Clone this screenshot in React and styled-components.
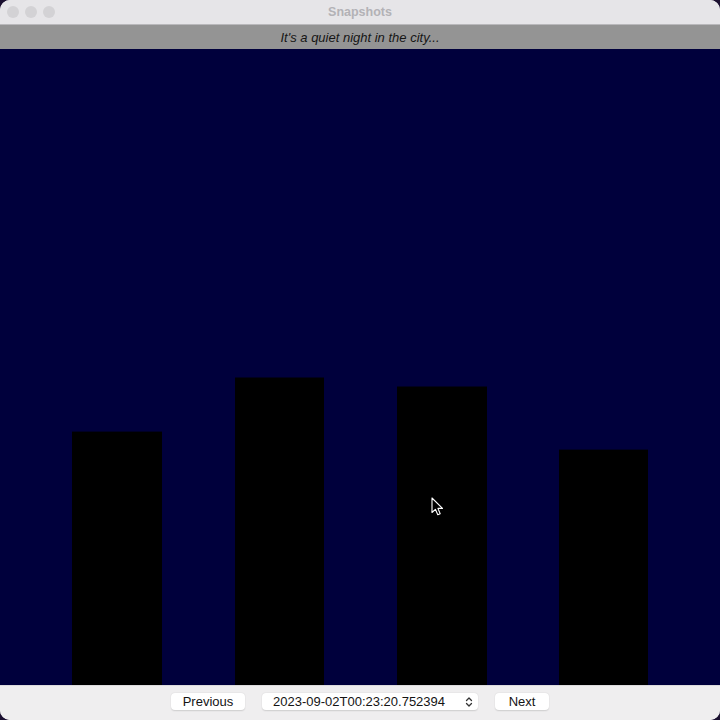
import React from "react";
import styled, { createGlobalStyle } from "styled-components";

const Global = createGlobalStyle`
  html, body { margin: 0; padding: 0; background: #1b1030; }
  body { font-family: "Liberation Sans", "Noto Sans", Arial, sans-serif; }
  * { box-sizing: border-box; }
`;

const Window = styled.div`
  width: 720px;
  height: 720px;
  display: flex;
  flex-direction: column;
  border-radius: 10px;
  overflow: hidden;
  background: #efeeef;
`;

const TitleBar = styled.div`
  height: 25px;
  flex: none;
  position: relative;
  display: flex;
  align-items: center;
  justify-content: center;
  background: #e6e5e8;
  border-bottom: 1px solid #b9b8bb;
`;

const Lights = styled.div`
  position: absolute;
  left: 7px;
  top: 6px;
  display: flex;
  gap: 6px;
`;

const Light = styled.span`
  width: 12px;
  height: 12px;
  border-radius: 50%;
  background: #d3d2d5;
`;

const Title = styled.div`
  font-size: 12.5px;
  font-weight: bold;
  color: #b3b2b6;
`;

const Banner = styled.div`
  height: 24px;
  flex: none;
  display: flex;
  align-items: center;
  justify-content: center;
  background: #949494;
  font-size: 13px;
  font-style: italic;
  color: #161616;
`;

const Scene = styled.div`
  flex: 1;
  position: relative;
  background: #00003c;
  overflow: hidden;
`;

const SceneSvg = styled.svg`
  display: block;
  width: 100%;
  height: 100%;
`;

const Pointer = styled.svg`
  position: absolute;
  left: 431px;
  top: 448px;
`;

const Toolbar = styled.div`
  height: 35px;
  flex: none;
  display: flex;
  align-items: center;
  justify-content: center;
  gap: 17px;
  background: #efeeef;
  border-top: 1px solid #dcdbdd;
  padding-bottom: 3px;
`;

const Button = styled.button`
  height: 17px;
  width: ${(p) => p.$w}px;
  border: none;
  border-radius: 4px;
  background: #ffffff;
  box-shadow: 0 0.5px 1.5px rgba(0,0,0,0.14);
  font-family: "Liberation Sans", Arial, sans-serif;
  font-size: 13px;
  color: #141414;
  padding: 0;
  display: flex;
  align-items: center;
  justify-content: center;
`;

const Combo = styled.div`
  height: 17px;
  width: 216px;
  border-radius: 4px;
  background: #ffffff;
  box-shadow: 0 0.5px 1.5px rgba(0,0,0,0.14);
  font-size: 13px;
  color: #141414;
  display: flex;
  align-items: center;
  justify-content: space-between;
  padding: 0 4px 0 11px;
`;

const buildings = [
  { x: 72, w: 90, top: 432 },
  { x: 235, w: 89, top: 378 },
  { x: 397, w: 90, top: 387 },
  { x: 559, w: 89, top: 450 },
];

export default function App() {
  const sceneTop = 50;
  const sceneH = 635;
  return (
    <>
      <Global />
      <Window>
        <TitleBar>
          <Lights>
            <Light />
            <Light />
            <Light />
          </Lights>
          <Title>Snapshots</Title>
        </TitleBar>
        <Banner>It's a quiet night in the city...</Banner>
        <Scene>
          <SceneSvg viewBox={`0 0 720 ${sceneH}`} preserveAspectRatio="none">
            {buildings.map((b, i) => (
              <rect key={i} x={b.x} y={b.top - sceneTop} width={b.w} height={sceneH - (b.top - sceneTop)} fill="#000000" />
            ))}
          </SceneSvg>
          <Pointer width="14" height="20" viewBox="0 0 14 20">
            <path d="M1 1 L1 15.5 L4.4 12.3 L6.8 17.8 L9.2 16.8 L6.9 11.4 L11.5 11.4 Z" fill="#000" stroke="#fff" strokeWidth="1.1" strokeLinejoin="round" />
          </Pointer>
        </Scene>
        <Toolbar>
          <Button $w={74}>Previous</Button>
          <Combo>
            <span>2023-09-02T00:23:20.752394</span>
            <svg width="10" height="12" viewBox="0 0 10 12">
              <path d="M2.5 4.5 L5 2 L7.5 4.5 M2.5 7.5 L5 10 L7.5 7.5" fill="none" stroke="#333" strokeWidth="1.3" strokeLinecap="round" strokeLinejoin="round" />
            </svg>
          </Combo>
          <Button $w={54}>Next</Button>
        </Toolbar>
      </Window>
    </>
  );
}
